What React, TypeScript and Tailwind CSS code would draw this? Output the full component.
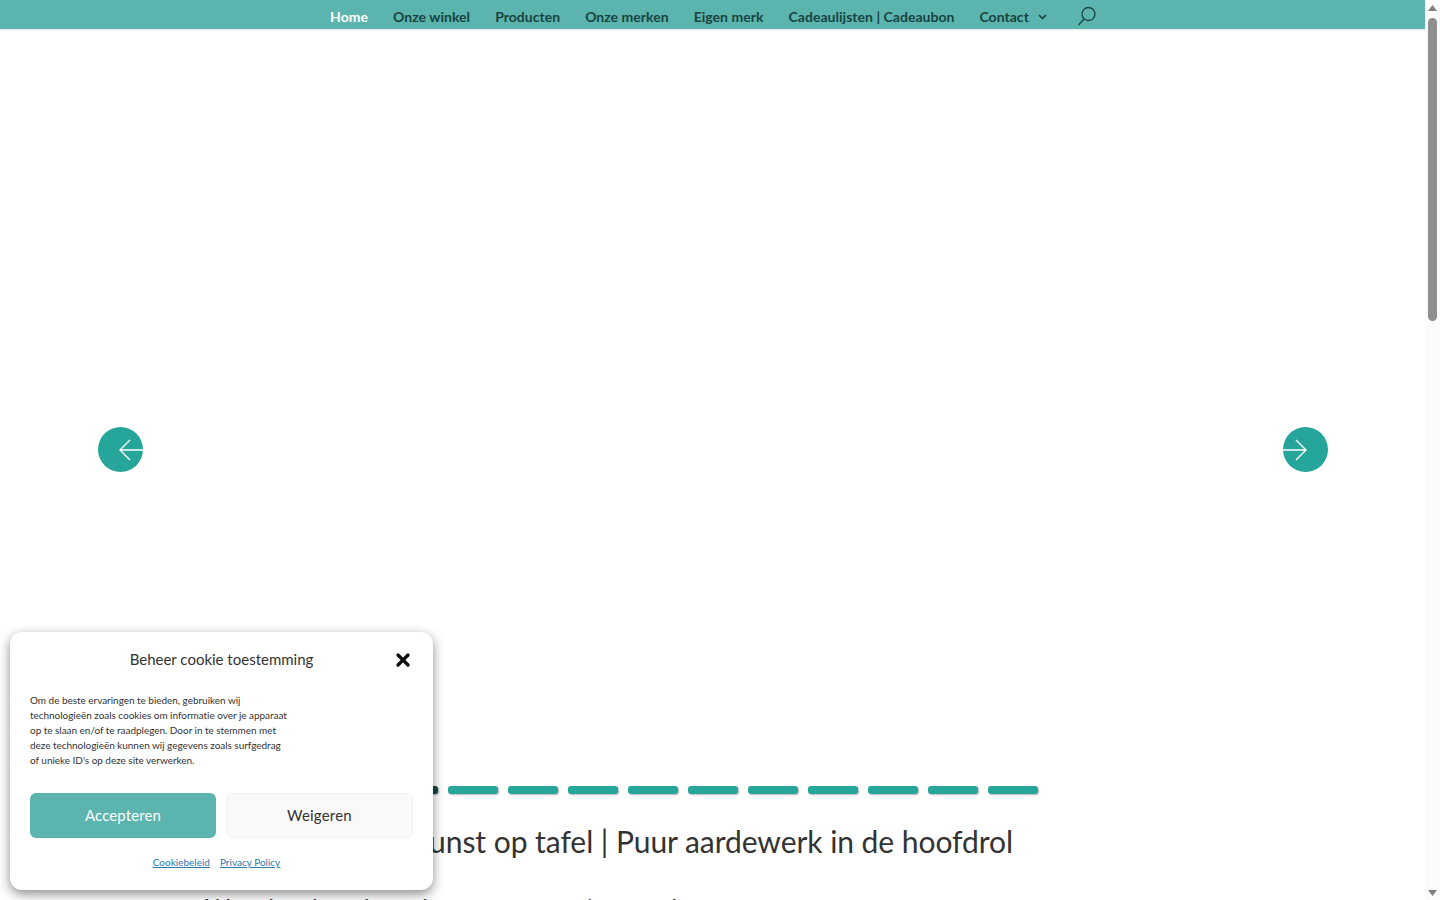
import { X } from 'lucide-react';

// Top navigation, hero slider, cookie consent dialog, fake page scrollbar.

const NAV_ITEMS = ['Onze winkel', 'Producten', 'Onze merken', 'Eigen merk', 'Cadeaulijsten | Cadeaubon'];

const FONT = "font-['Lato','Noto_Sans',sans-serif]";

function ArrowButton({ dir }: { dir: 'left' | 'right' }) {
  return (
    <div className="flex h-[45px] w-[45px] items-center justify-center rounded-full bg-[#26a69a]">
      <svg width="45" height="45" viewBox="0 0 45 45" fill="none" stroke="#fff" strokeWidth="1.4">
        {dir === 'left' ? (
          <path d="M45 23H22M32 13l-10 10 10 10" />
        ) : (
          <path d="M0 23h23M13 13l10 10-10 10" />
        )}
      </svg>
    </div>
  );
}

function Scrollbar() {
  return (
    <div className="absolute inset-y-0 right-0 flex w-[15px] flex-col items-center bg-[#fbfbfb]">
      <div className="flex h-[15px] w-full items-center justify-center">
        <svg width="9" height="6" viewBox="0 0 9 6"><path d="M4.5 0 9 6H0z" fill="#7e7e7e" /></svg>
      </div>
      <div className="mt-[3px] h-[303px] w-[9px] rounded-full bg-[#8f8f8f]" />
      <div className="mt-auto flex h-[15px] w-full items-center justify-center">
        <svg width="9" height="6" viewBox="0 0 9 6"><path d="M0 0h9L4.5 6z" fill="#7e7e7e" /></svg>
      </div>
    </div>
  );
}

function CookieDialog() {
  return (
    <div className="absolute bottom-[10px] left-[10px] h-[258px] w-[423px] rounded-[12px] bg-white shadow-[0_4px_12px_rgba(0,0,0,0.45)]">
      <div className="relative flex h-[55px] items-center justify-center">
        <h2 className="text-[15px] leading-none text-[#333]">Beheer cookie toestemming</h2>
        <X className="absolute left-[383px] top-[18px] text-[#111]" size={20} strokeWidth={4} />
      </div>
      <p className="mt-[6px] pl-[20px] text-[10px] leading-[15px] tracking-[-0.035px] text-[#333]">
        Om de beste ervaringen te bieden, gebruiken wij<br />
        technologieën zoals cookies om informatie over je apparaat<br />
        op te slaan en/of te raadplegen. Door in te stemmen met<br />
        deze technologieën kunnen wij gegevens zoals surfgedrag<br />
        of unieke ID's op deze site verwerken.
      </p>
      <div className="mt-[25px] flex gap-[10px] px-[20px]">
        <button className="h-[45px] w-[186px] rounded-[6px] bg-[#5bb4ad] text-[15px] tracking-[0.1px] text-white">Accepteren</button>
        <button className="h-[45px] w-[187px] rounded-[6px] border border-[#f2f2f2] bg-[#f9f9f9] text-[15px] tracking-[0.2px] text-[#333]">Weigeren</button>
      </div>
      <div className="mt-[18px] flex justify-center gap-[10px] pr-[10px] text-[10px] leading-[13px] text-[#2a79b0] underline">
        <a>Cookiebeleid</a>
        <a>Privacy Policy</a>
      </div>
    </div>
  );
}

export default function App() {
  return (
    <div className={`relative h-[900px] w-[1440px] overflow-hidden bg-white ${FONT}`}>
      <div className="w-[1425px]">
        <nav className="flex h-[29px] items-center justify-center gap-[25px] bg-[#5bb4ad] pl-[2px] pt-[4px] text-[14px] font-bold tracking-[0.03px] text-[#17443f] shadow-[0_1px_1px_rgba(0,0,0,0.08)]">
          <a className="text-white">Home</a>
          {NAV_ITEMS.map((item) => (
            <a key={item}>{item}</a>
          ))}
          <a className="flex items-center gap-[9px]">
            Contact
            <svg width="9" height="6" viewBox="0 0 9 6" fill="none" stroke="#17443f" strokeWidth="1.6" className="mt-[1px]">
              <path d="M1 1l3.5 3.5L8 1" />
            </svg>
          </a>
          <svg width="20" height="20" viewBox="0 0 20 20" fill="none" stroke="#17443f" strokeWidth="1.3" className="ml-[5px] mt-[-1px]">
            <circle cx="11.5" cy="8" r="6.5" />
            <path d="M7 13l-5.5 6" />
          </svg>
        </nav>

        <section className="flex h-[765px] flex-col">
          <div className="flex flex-1 items-center justify-between pl-[98px] pr-[97px] pt-[84px]">
            <ArrowButton dir="left" />
            <ArrowButton dir="right" />
          </div>
          <div className="flex justify-center gap-[10px]">
            {Array.from({ length: 11 }).map((_, i) => (
              <span
                key={i}
                className={`h-[8px] w-[50px] rounded-[3px] shadow-[1px_1px_2px_rgba(0,0,0,0.3)] ${i === 0 ? 'bg-[#12474a]' : 'bg-[#26a69a]'}`}
              />
            ))}
          </div>
        </section>

        <div className="mt-[28px] pr-[2px] text-center">
          <h1 className="text-[30px] leading-[38px] tracking-[-0.05px] text-[#333]">Kunst op tafel | Puur aardewerk in de hoofdrol</h1>
        </div>
        {/* only the ascender tips show at the fold; the wording is a stand-in, the reference cuts it off */}
        <p className="mt-[32px] whitespace-nowrap pl-[205px] text-[24px] leading-[30px] text-[#333]">
          Waardevol aardewerk van onze mooiste merken
        </p>
      </div>
      <CookieDialog />
      <Scrollbar />
    </div>
  );
}
